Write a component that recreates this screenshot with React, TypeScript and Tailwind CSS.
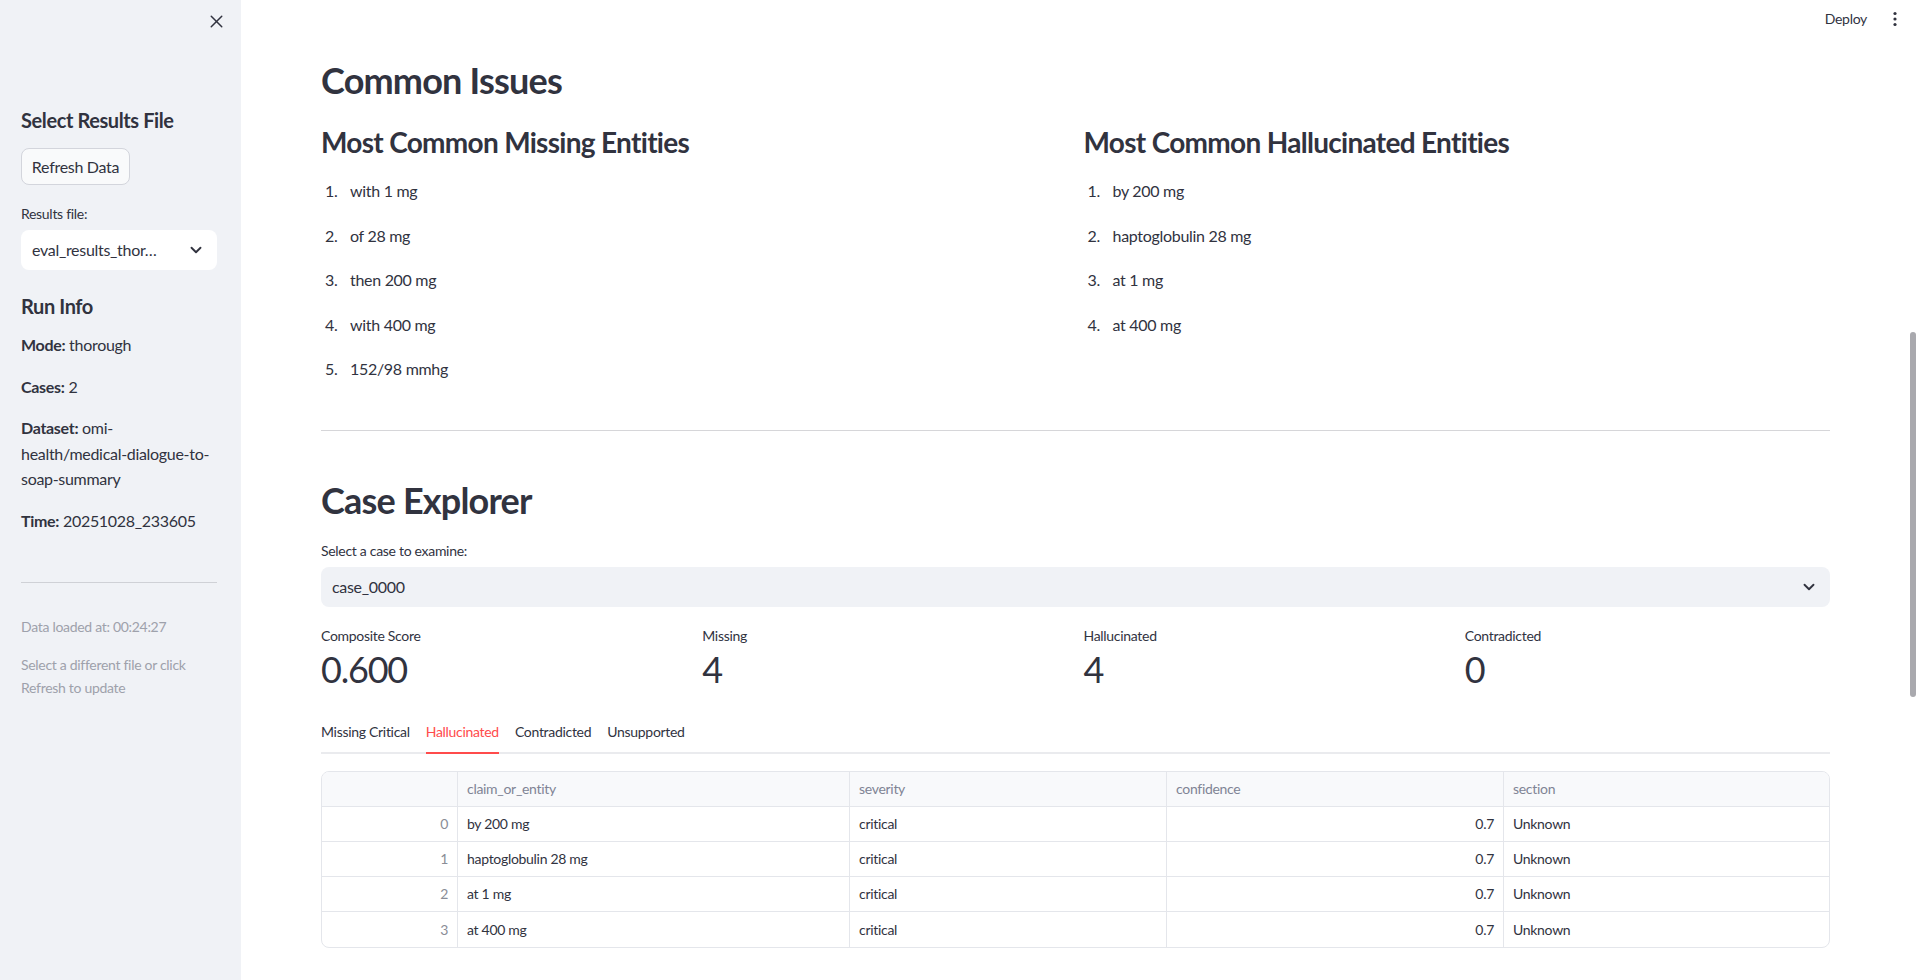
import { X, ChevronDown } from "lucide-react";

const missing = ["with 1 mg", "of 28 mg", "then 200 mg", "with 400 mg", "152/98 mmhg"];
const hallucinated = ["by 200 mg", "haptoglobulin 28 mg", "at 1 mg", "at 400 mg"];

const metrics = [
  { label: "Composite Score", value: "0.600" },
  { label: "Missing", value: "4" },
  { label: "Hallucinated", value: "4" },
  { label: "Contradicted", value: "0" },
];

const tabs = ["Missing Critical", "Hallucinated", "Contradicted", "Unsupported"];

const rows = [
  { idx: 0, claim: "by 200 mg" },
  { idx: 1, claim: "haptoglobulin 28 mg" },
  { idx: 2, claim: "at 1 mg" },
  { idx: 3, claim: "at 400 mg" },
];

function EntityList({ title, items }: { title: string; items: string[] }) {
  return (
    <div>
      <h3 className="text-[28px] font-bold leading-[34px] tracking-[-0.7px]">{title}</h3>
      <ol className="mt-[19px] flex flex-col gap-[19px]">
        {items.map((item, i) => (
          <li key={item} className="flex pl-[4px] text-[16px] leading-[25.6px]">
            <span className="w-[25px] shrink-0">{i + 1}.</span>
            <span>{item}</span>
          </li>
        ))}
      </ol>
    </div>
  );
}

function Sidebar() {
  return (
    <aside className="w-[241px] shrink-0 bg-[#f0f2f6] pl-[21px] pr-[24px] flex flex-col">
      <div className="h-[42px] flex items-center justify-end -mr-[10px]">
        <X size={21} strokeWidth={1.7} className="text-[#31333f]" />
      </div>

      <h3 className="mt-[66px] text-[20px] font-bold leading-[24px] tracking-[-0.4px]">Select Results File</h3>
      <button className="mt-[16px] h-[37px] w-[109px] rounded-[8px] border border-[#d3d5dc] bg-[#f9fafb] text-[16px]">
        Refresh Data
      </button>

      <div className="mt-[18px] text-[14px] leading-[21px]">Results file:</div>
      <div className="mt-[6px] h-[40px] rounded-[8px] bg-white flex items-center justify-between pl-[11px] pr-[12px]">
        <span className="text-[16px]">eval_results_thor…</span>
        <ChevronDown size={18} strokeWidth={2.5} />
      </div>

      <h3 className="mt-[24px] text-[20px] font-bold leading-[24px] tracking-[-0.4px]">Run Info</h3>
      <div className="mt-[14px] flex flex-col gap-[16px] text-[16px] leading-[25.6px] whitespace-nowrap">
        <p>
          <b className="font-bold">Mode:</b> thorough
        </p>
        <p>
          <b className="font-bold">Cases:</b> 2
        </p>
        <p>
          <b className="font-bold">Dataset:</b> omi-
          <br />
          health/medical-dialogue-to-
          <br />
          soap-summary
        </p>
        <p>
          <b className="font-bold">Time:</b> 20251028_233605
        </p>
      </div>

      <div className="mt-[48px] h-px bg-[#cfd1d6]" />

      <div className="mt-[32px] text-[14px] leading-[23px] text-[#9ea1ab]">Data loaded at: 00:24:27</div>
      <div className="mt-[15px] text-[14px] leading-[23px] text-[#9ea1ab] whitespace-nowrap">
        Select a different file or click
        <br />
        Refresh to update
      </div>
    </aside>
  );
}

function ResultsTable() {
  const cols = "grid grid-cols-[136px_392px_317px_337px_1fr]";
  return (
    <div className="mt-[17px] rounded-[8px] border border-[#e4e6eb] overflow-hidden text-[14px]">
      <div className={`${cols} h-[35px] bg-[#f8f9fb] text-[#808495] border-b border-[#e4e6eb]`}>
        <div className="border-r border-[#e4e6eb]" />
        <div className="border-r border-[#e4e6eb] flex items-center px-[9px]">claim_or_entity</div>
        <div className="border-r border-[#e4e6eb] flex items-center px-[9px]">severity</div>
        <div className="border-r border-[#e4e6eb] flex items-center px-[9px]">confidence</div>
        <div className="flex items-center px-[9px]">section</div>
      </div>
      {rows.map((r, i) => (
        <div
          key={r.idx}
          className={`${cols} h-[35px] ${i < rows.length - 1 ? "border-b border-[#e4e6eb]" : ""}`}
        >
          <div className="border-r border-[#e4e6eb] flex items-center justify-end px-[9px] text-[#8a8d97]">
            {r.idx}
          </div>
          <div className="border-r border-[#e4e6eb] flex items-center px-[9px]">{r.claim}</div>
          <div className="border-r border-[#e4e6eb] flex items-center px-[9px]">critical</div>
          <div className="border-r border-[#e4e6eb] flex items-center justify-end px-[9px]">0.7</div>
          <div className="flex items-center px-[9px]">Unknown</div>
        </div>
      ))}
    </div>
  );
}

export default function App() {
  return (
    <div className="relative flex h-[980px] w-[1917px] overflow-hidden bg-white text-[#31333f] tracking-[-0.3px] font-['Lato','Noto_Sans',sans-serif]">
      <Sidebar />

      <main className="flex-1 pl-[80px] pr-[87px]">
        <h2 className="mt-[59px] text-[36px] font-bold leading-[43px] tracking-[-0.8px]">Common Issues</h2>

        <div className="mt-[23px] grid grid-cols-2 gap-4">
          <EntityList title="Most Common Missing Entities" items={missing} />
          <EntityList title="Most Common Hallucinated Entities" items={hallucinated} />
        </div>

        <div className="mt-[48px] h-px bg-[#d6d6d9]" />

        <h2 className="mt-[48px] text-[36px] font-bold leading-[43px] tracking-[-0.8px]">Case Explorer</h2>

        <div className="mt-[18px] text-[14px] leading-[21px]">Select a case to examine:</div>
        <div className="mt-[6px] h-[40px] rounded-[8px] bg-[#f0f2f6] flex items-center justify-between pl-[11px] pr-[12px]">
          <span className="text-[16px]">case_0000</span>
          <ChevronDown size={18} strokeWidth={2.5} />
        </div>

        <div className="mt-[18px] grid grid-cols-4 gap-4">
          {metrics.map((m) => (
            <div key={m.label}>
              <div className="text-[14px] leading-[21px]">{m.label}</div>
              <div className="mt-[2px] text-[36px] leading-[43px] tracking-[-1.2px]">{m.value}</div>
            </div>
          ))}
        </div>

        <div className="mt-[21px] flex gap-4 border-b-2 border-[#eaebee]">
          {tabs.map((t) => (
            <div
              key={t}
              className={`h-[42px] -mb-[2px] flex items-center border-b-2 text-[14px] ${
                t === "Hallucinated" ? "border-[#ff4b4b] text-[#ff4b4b]" : "border-transparent"
              }`}
            >
              {t}
            </div>
          ))}
        </div>

        <ResultsTable />
      </main>

      <div className="absolute right-[14px] top-[6px] h-[25px] flex items-center gap-[20px] text-[14px]">
        <span>Deploy</span>
        <svg width="16" height="16" viewBox="0 0 16 16" className="text-[#31333f]">
          <circle cx="8" cy="2.5" r="1.6" fill="currentColor" />
          <circle cx="8" cy="8" r="1.6" fill="currentColor" />
          <circle cx="8" cy="13.5" r="1.6" fill="currentColor" />
        </svg>
      </div>

      <div className="absolute right-[1px] top-[332px] w-[6px] h-[365px] rounded-full bg-[#a9a9ae]" />
    </div>
  );
}
